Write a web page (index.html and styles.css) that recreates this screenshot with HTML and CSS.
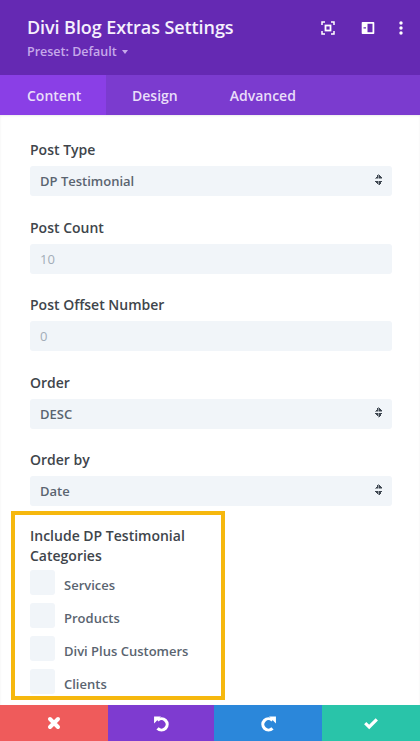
FILE: index.html
```html
<!DOCTYPE html>
<html>
	<head>
		<meta charset="utf-8"/>
		<title>Divi Blog Extras Settings</title>
		<link rel="stylesheet" href="styles.css">
	</head>
	<body>
		<div class="modal">
			<header class="head">
				<div class="head-text">
					<h1>Divi Blog Extras Settings</h1>
					<p class="preset">Preset: Default <span class="caret"></span></p>
				</div>
				<div class="head-icons">
					<svg class="icon-focus" width="14" height="14" viewBox="0 0 14 14" fill="none" stroke="#fff" stroke-width="1.5">
						<path d="M1 4V1h3M10 1h3v3M13 10v3h-3M4 13H1v-3"/>
						<rect x="4.500" y="4.500" width="5" height="5" stroke-width="1.800"/>
					</svg>
					<svg width="14" height="14" viewBox="0 0 14 14">
						<path fill="#fff" fill-rule="evenodd" d="M1.500 1h11a.8.8 0 0 1 .8.8v10.400a.8.8 0 0 1-.8.8h-11a.8.8 0 0 1-.8-.8V1.800a.8.8 0 0 1 .8-.8zM6.500 2.800v8.400h5V2.800zM2.500 6.200v1.400h2.500V6.200z"/>
					</svg>
					<svg width="4" height="14" viewBox="0 0 4 14" fill="#fff">
						<circle cx="2" cy="2" r="1.700"/>
						<circle cx="2" cy="7" r="1.700"/>
						<circle cx="2" cy="12" r="1.700"/>
					</svg>
				</div>
			</header>
			<nav class="tabs">
				<a class="tab active">Content</a>
				<a class="tab">Design</a>
				<a class="tab">Advanced</a>
			</nav>
			<main class="content">
				<div class="field">
					<label>Post Type</label>
					<div class="input select">DP Testimonial<span class="arrows"></span></div>
				</div>
				<div class="field">
					<label>Post Count</label>
					<div class="input muted">10</div>
				</div>
				<div class="field">
					<label>Post Offset Number</label>
					<div class="input muted">0</div>
				</div>
				<div class="field">
					<label>Order</label>
					<div class="input select">DESC<span class="arrows"></span></div>
				</div>
				<div class="field">
					<label>Order by</label>
					<div class="input select">Date<span class="arrows"></span></div>
				</div>
				<div class="cats">
					<label>Include DP Testimonial Categories</label>
					<div class="check"><span class="box"></span>Services</div>
					<div class="check"><span class="box"></span>Products</div>
					<div class="check"><span class="box"></span>Divi Plus Customers</div>
					<div class="check"><span class="box"></span>Clients</div>
				</div>
			</main>
			<footer class="foot">
				<button class="red">
					<svg width="16" height="16" viewBox="0 0 16 16"><path d="M4 4l8 8M12 4l-8 8" stroke="#fff" stroke-width="4" stroke-linecap="round"/></svg>
				</button>
				<button class="purple">
					<svg width="17" height="17" viewBox="0 0 16 16" fill="none"><path d="M4.250 5.050A5.300 5.300 0 1 1 4.250 12.550" stroke="#fff" stroke-width="3"/><path d="M1 1.500h6.500L1 8z" fill="#fff"/></svg>
				</button>
				<button class="blue">
					<svg width="17" height="17" viewBox="0 0 16 16" fill="none"><path d="M11.750 5.050A5.300 5.300 0 1 0 11.750 12.550" stroke="#fff" stroke-width="3"/><path d="M15 1.500H8.500L15 8z" fill="#fff"/></svg>
				</button>
				<button class="green">
					<svg width="16" height="16" viewBox="0 0 16 16" fill="none"><path d="M2.200 8.200l4 3.800 7.600-7.600" stroke="#fff" stroke-width="3.200"/></svg>
				</button>
			</footer>
		</div>
	</body>
</html>
```

FILE: styles.css
```css
* {
	box-sizing: border-box;
}
body {
	margin: 0;
	font-family: "Open Sans", sans-serif;
	background: #fff;
}
.modal {
	height: 741px;
	display: flex;
	flex-direction: column;
	overflow: hidden;
}
.head {
	height: 75px;
	flex: none;
	padding: 0 17px 0 27px;
	background: #6529b3;
	color: #fff;
	display: flex;
	justify-content: space-between;
}
.head h1 {
	margin: 15px 0 0;
	font-size: 18px;
	line-height: 24px;
	font-weight: 600;
	letter-spacing: -.08px;
	color: #f6f0fd;
}
.preset {
	margin: 4px 0 0;
	font-size: 12.500px;
	line-height: 17px;
	font-weight: 600;
	color: #c6a9ea;
}
.caret {
	display: inline-block;
	margin-left: 2px;
	vertical-align: 2px;
	border: 3px solid transparent;
	border-top: 4px solid #c6a9ea;
	border-bottom: 0;
}
.head-icons {
	display: flex;
	align-items: center;
	gap: 24px;
	height: 56px;
}
.icon-focus {
	margin-right: 2px;
}
.tabs {
	height: 40px;
	flex: none;
	background: #7b3bcf;
	display: flex;
}
.tab {
	padding: 1px 26px 0;
	font-size: 14px;
	line-height: 40px;
	font-weight: 600;
	color: #e9def9;
}
.tab.active {
	width: 106px;
	padding-left: 27px;
	background: #8a3fe6;
}
.content {
	flex: 1;
	min-height: 0;
	padding: 25px 28px 0 30px;
	box-shadow: inset 0 1px 2px rgba(0, 0, 0, .08);
}
.field {
	height: 77.500px;
}
label {
	display: block;
	font-size: 14px;
	line-height: 20px;
	font-weight: 600;
	color: #40454b;
}
.input {
	height: 30px;
	margin-top: 6px;
	padding: 0 10px;
	position: relative;
	background: #f1f5f9;
	border-radius: 3px;
	font-size: 13px;
	line-height: 30px;
	font-weight: 600;
	color: #5a6470;
}
.input.muted {
	font-weight: 400;
	color: #a3adb8;
}
.arrows {
	position: absolute;
	right: 10px;
	top: 8px;
	width: 7px;
	height: 11px;
	background:
		linear-gradient(to bottom right, transparent 50%, #3d4650 50%) left top / 3.500px 4.500px no-repeat,
		linear-gradient(to bottom left, transparent 50%, #3d4650 50%) right top / 3.500px 4.500px no-repeat,
		linear-gradient(to top right, transparent 50%, #3d4650 50%) left bottom / 3.500px 4.500px no-repeat,
		linear-gradient(to top left, transparent 50%, #3d4650 50%) right bottom / 3.500px 4.500px no-repeat;
}
.cats {
	width: 214px;
	height: 189px;
	margin: -16.500px 0 0 -19px;
	padding: 11px 15px 0;
	border: 4px solid #f6b80e;
}
.cats label {
	margin-bottom: 4px;
}
.check {
	height: 25px;
	margin-bottom: 8px;
	display: flex;
	font-size: 13px;
	line-height: 31px;
	font-weight: 600;
	color: #5a6470;
}
.box {
	width: 25px;
	height: 25px;
	margin-right: 9px;
	background: #f1f5f9;
	border-radius: 3px;
}
.foot {
	height: 36px;
	flex: none;
	display: grid;
	grid-template-columns: 108px 106px 108px 98px;
}
.foot button {
	padding: 0;
	border: 0;
	display: flex;
	align-items: center;
	justify-content: center;
}
.red {
	background: #ef5b5b;
}
.purple {
	background: #7e3bd0;
}
.blue {
	background: #2b87da;
}
.green {
	background: #29c4a9;
}
```
